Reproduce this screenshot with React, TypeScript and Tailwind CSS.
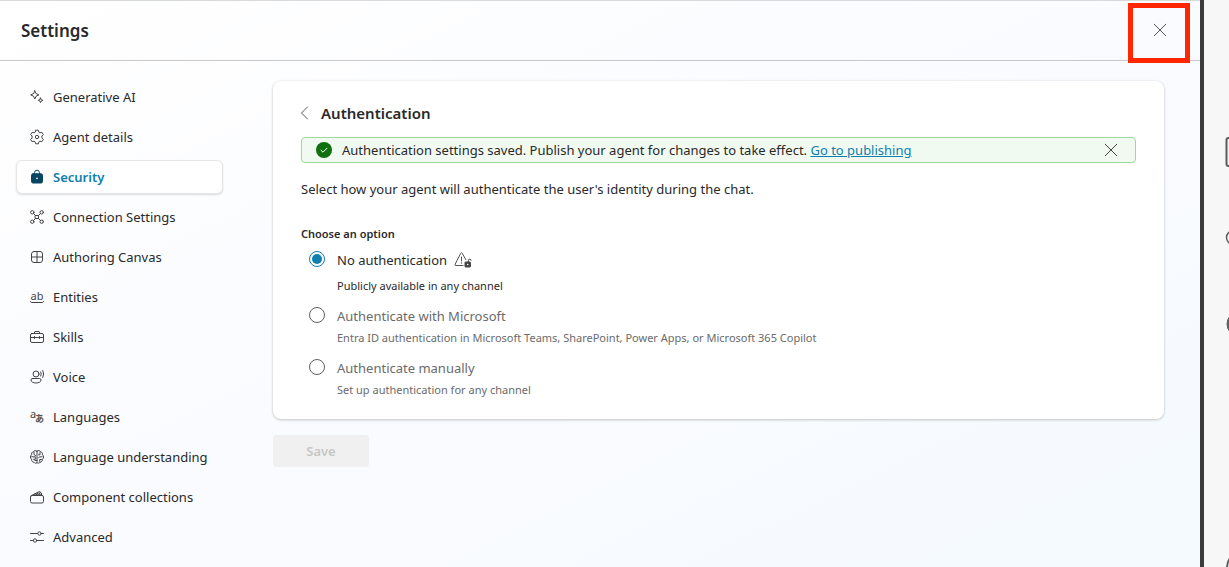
import { useState } from "react";
import type { ReactNode } from "react";

function NavIcon({ children }: { children: ReactNode }) {
  return (
    <svg
      className="size-4 shrink-0 overflow-visible"
      viewBox="0 0 16 16"
      fill="none"
      stroke="currentColor"
      strokeWidth="1"
      strokeLinecap="round"
      strokeLinejoin="round"
      aria-hidden="true"
    >
      {children}
    </svg>
  );
}

const navItems: { label: string; icon: ReactNode }[] = [
  {
    label: "Generative AI",
    icon: (
      <>
        <path d="M5.800 1.800 7.100 4.600l2.800 1.300-2.800 1.300-1.300 2.800-1.300-2.800-2.800-1.300 2.800-1.300Z" />
        <path d="m11.500 9 .7 1.600 1.600.7-1.600.7-.7 1.600-.7-1.600-1.600-.7 1.600-.7Z" />
      </>
    ),
  },
  {
    label: "Agent details",
    icon: (
      <>
        <path d="M6.700 1.200h2.600l.6 2 1 .6 2-.5 1.400 2.200L12.900 7v2l1.400 1.500-1.400 2.200-2-.5-1 .6-.6 2H6.700l-.6-2-1-.6-2 .5-1.400-2.200L3.100 9V7L1.700 5.500l1.400-2.200 2 .5 1-.6Z" />
        <circle cx="8" cy="8" r="1.700" />
      </>
    ),
  },
  {
    label: "Security",
    icon: (
      <>
        <path d="M5.600 5V3.600a2.400 2.400 0 0 1 4.800 0V5" />
        <rect x="2.500" y="4.800" width="11" height="9.200" rx="1.500" fill="currentColor" />
        <circle cx="8" cy="9.400" r=".8" fill="white" stroke="none" />
      </>
    ),
  },
  {
    label: "Connection Settings",
    icon: (
      <>
        <circle cx="3.300" cy="3.300" r="1.700" />
        <circle cx="12.700" cy="3.300" r="1.700" />
        <circle cx="3.300" cy="12.700" r="1.700" />
        <circle cx="12.700" cy="12.700" r="1.700" />
        <rect x="6.500" y="6.500" width="3" height="3" />
        <path d="m4.600 4.600 1.900 1.900m3 3 1.900 1.900m0-6.800L9.500 6.500m-3 3-1.900 1.900" />
      </>
    ),
  },
  {
    label: "Authoring Canvas",
    icon: (
      <>
        <rect x="2.500" y="2.500" width="11" height="11" rx="2.500" />
        <path d="M8 2.500v11M2.500 8h11" />
      </>
    ),
  },
  {
    label: "Entities",
    icon: (
      <>
        <text x="8" y="11" textAnchor="middle" fontSize="11" fill="currentColor" stroke="none">
          ab
        </text>
        <path d="M1.500 12.500q0 1 1 1h11q1 0 1-1" />
      </>
    ),
  },
  {
    label: "Skills",
    icon: (
      <>
        <rect x="1.500" y="4.500" width="13" height="9" rx="1.500" />
        <path d="M5 4.500 6 2.500h4l1 2M1.500 8.500h13M5.500 7.500v2M10.500 7.500v2" />
      </>
    ),
  },
  {
    label: "Voice",
    icon: (
      <>
        <circle cx="7" cy="5" r="3" />
        <path d="M3.500 9.500h7q1.500 0 1.500 1.500c0 2-2.500 3-5 3s-5-1-5-3q0-1.500 1.500-1.500ZM11.800 3q1 2 0 4M13.800 1.500q1.800 3.500 0 7" />
      </>
    ),
  },
  {
    label: "Languages",
    icon: (
      <>
        <text x="1" y="9" fontSize="11" fill="currentColor" stroke="none">
          a
        </text>
        <text x="6" y="13" fontSize="9" fill="currentColor" stroke="currentColor" strokeWidth=".3">
          あ
        </text>
      </>
    ),
  },
  {
    label: "Language understanding",
    icon: (
      <>
        <path d="M8 2.200c-1-1-3-.9-3.500.6C2.800 3 2.200 4.500 2.700 5.800 1 6.800 1 9.200 2.600 10.200c-.3 1.700.9 3 2.400 3 .7 1.300 2.200 1.300 3 .4.800.9 2.300.9 3-.4 1.500 0 2.700-1.300 2.400-3C15 9.200 15 6.800 13.300 5.800c.5-1.300-.1-2.800-1.800-3C11 1.300 9 1.200 8 2.200Z" />
        <path d="M8 2.200v11.400M5 3.500v2l1.500 1M2.700 7.800h3.600v2.500H4.500M8 11.500H6M11 3.500v2.300H9.500M13 7.800h-2.500L9.500 9M12.500 10.500h-1.800v2" />
      </>
    ),
  },
  {
    label: "Component collections",
    icon: (
      <>
        <rect x="1.500" y="6.500" width="13" height="7.500" rx="1.500" />
        <path d="M2 6.800 10.500 2.500l2 1.500v2.500M5.500 5.200h6.500M7 6.500l2-3M9.500 6.500l1.500-3" />
      </>
    ),
  },
  {
    label: "Advanced",
    icon: (
      <>
        <path d="M1.500 4.500h7M12.500 4.500h2M1.500 11.500h2.500M8 11.500h6.500" />
        <circle cx="10.500" cy="4.500" r="1.700" />
        <circle cx="6" cy="11.500" r="1.700" />
      </>
    ),
  },
];

const options = [
  { id: "none", label: "No authentication", hint: "Publicly available in any channel" },
  {
    id: "microsoft",
    label: "Authenticate with Microsoft",
    hint: "Entra ID authentication in Microsoft Teams, SharePoint, Power Apps, or Microsoft 365 Copilot",
  },
  { id: "manual", label: "Authenticate manually", hint: "Set up authentication for any channel" },
];

function CloseIcon() {
  return (
    <svg className="size-4" viewBox="0 0 16 16" fill="none" stroke="currentColor" strokeWidth="1" strokeLinecap="round" aria-hidden="true">
      <path d="m2.200 2.200 11.600 11.600M13.800 2.200 2.200 13.800" />
    </svg>
  );
}

function UnlockedWarning() {
  return (
    <svg className="size-[18px]" viewBox="0 0 18 18" fill="none" stroke="#555" strokeWidth="1" strokeLinejoin="round" aria-hidden="true">
      <path d="M9.500 14.500H2q-1.500 0-.8-1.400L6.700 2.300q.8-1.400 1.600 0L12 9" />
      <path d="M7.500 6v4" strokeLinecap="round" />
      <circle cx="7.500" cy="12" r=".7" fill="#555" stroke="none" />
      <rect x="11" y="11" width="5.500" height="5" rx=".6" fill="#444" stroke="#444" />
      <path d="M14.300 11V9.600a1.400 1.400 0 0 1 2.800 0" stroke="#444" />
      <circle cx="13.700" cy="13.500" r=".8" fill="white" stroke="none" />
    </svg>
  );
}

export default function App() {
  const [active, setActive] = useState("Security");
  const [choice, setChoice] = useState("none");

  return (
    <div className="flex h-screen overflow-hidden bg-[#f7f7f7] font-['Noto_Sans','Noto_Sans_CJK_JP',sans-serif] text-[13px] leading-5 text-[#292929]">
      <div className="flex min-w-0 flex-1 flex-col border-r-4 border-[#3b3b3b] bg-linear-to-br from-white via-[#fafbff] to-[#f4faff]">
        <header className="relative flex h-[61px] shrink-0 items-center justify-between border-y border-t-[#d8dadc] border-b-[#c8c8ca] pt-px pl-[21px]">
          <h1 className="text-[17px] leading-7 font-semibold">Settings</h1>
          <button type="button" aria-label="Close settings" className="mr-8 mb-[2px] text-[#555]">
            <CloseIcon />
          </button>
          <span className="pointer-events-none absolute top-[2px] right-[10px] h-[60px] w-[62px] border-5 border-[#ff2600]" />
        </header>

        <div className="flex min-h-0 flex-1">
          <nav aria-label="Settings sections" className="flex w-[223px] shrink-0 flex-col gap-[6px] pt-[19px] pl-4">
            {navItems.map((item) => {
              const selected = item.label === active;
              return (
                <button
                  key={item.label}
                  type="button"
                  onClick={() => setActive(item.label)}
                  aria-current={selected ? "page" : undefined}
                  className={
                    selected
                      ? "flex h-[34px] shrink-0 items-center gap-2 rounded-md border border-[#e4e6e8] bg-white pl-3 font-semibold whitespace-nowrap text-[#0f80ad] shadow-[0_1px_2px_rgba(0,0,0,0.14)]"
                      : "flex h-[34px] shrink-0 items-center gap-2 border border-transparent pl-3 whitespace-nowrap"
                  }
                >
                  <span className={selected ? "text-[#064663]" : "text-[#444]"}>
                    <NavIcon>{item.icon}</NavIcon>
                  </span>
                  {item.label}
                </button>
              );
            })}
          </nav>

          <main className="min-w-0 flex-1 pt-5 pr-9 pl-[50px]">
            <section className="rounded-lg bg-white px-7 pt-[22px] pb-[21px] shadow-[0_1px_3px_rgba(0,0,0,0.2),0_0_2px_rgba(0,0,0,0.08)]">
              <div className="flex items-center gap-[9px]">
                <button type="button" aria-label="Back" className="text-[#555]">
                  <svg className="h-4 w-[11px]" viewBox="0 0 11 16" fill="none" stroke="currentColor" strokeLinecap="round" strokeLinejoin="round" aria-hidden="true">
                    <path d="M6.500 2 .5 8l6 6" />
                  </svg>
                </button>
                <h2 className="text-[15px] leading-5 font-semibold">Authentication</h2>
              </div>

              <div role="status" className="mt-[14px] flex h-[26px] items-center rounded-[4px] border border-[#9fd89f] bg-[#f1faf1] pr-4 pl-[14px]">
                <svg className="size-4 shrink-0" viewBox="0 0 16 16" aria-hidden="true">
                  <circle cx="8" cy="8" r="8" fill="#107010" />
                  <path d="m5 8.200 2 2 4-4" fill="none" stroke="white" strokeLinecap="round" strokeLinejoin="round" />
                </svg>
                <p className="ml-[10px] flex-1">
                  Authentication settings saved. Publish your agent for changes to take effect.{" "}
                  <a href="#publishing" className="text-[#0f7fae] underline">Go to publishing</a>
                </p>
                <button type="button" aria-label="Dismiss message" className="text-[#444]">
                  <CloseIcon />
                </button>
              </div>

              <p className="mt-4">Select how your agent will authenticate the user&apos;s identity during the chat.</p>

              <fieldset className="mt-[27px]">
                <legend className="text-[11px] leading-4 font-semibold">Choose an option</legend>
                {options.map((option) => {
                  const checked = option.id === choice;
                  return (
                    <div
                      key={option.id}
                      className={checked ? "flex gap-3 pt-2 pl-2" : "flex gap-3 pt-3 pl-2 text-[#6b6b6b]"}
                    >
                      <input
                        type="radio"
                        id={option.id}
                        name="authentication"
                        checked={checked}
                        onChange={() => setChoice(option.id)}
                        aria-describedby={`${option.id}-hint`}
                        className="mt-px size-4 shrink-0 appearance-none rounded-full border border-[#616161] bg-white bg-clip-content p-[2px] checked:border-[#0f7fae] checked:bg-[#0f7fae]"
                      />
                      <div>
                        <div className="flex h-5 items-center gap-[7px]">
                          <label htmlFor={option.id}>{option.label}</label>
                          {option.id === "none" && <UnlockedWarning />}
                        </div>
                        <p id={`${option.id}-hint`} className={checked ? "mt-2 text-[11px] leading-4" : "mt-1 text-[11px] leading-4"}>
                          {option.hint}
                        </p>
                      </div>
                    </div>
                  );
                })}
              </fieldset>
            </section>

            <button type="button" disabled className="mt-4 h-8 w-24 rounded-sm bg-[#f1f0f0] font-semibold text-[#c7c7c7]">
              Save
            </button>
          </main>
        </div>
      </div>

      <aside className="w-[25px] shrink-0 overflow-hidden">
        <svg className="h-[567px] w-[25px]" viewBox="0 0 25 567" fill="none" stroke="#5d5d5d" aria-hidden="true">
          <rect x="22.500" y="138" width="28" height="28" rx="2" strokeWidth="2" />
          <circle cx="29.500" cy="237.500" r="7" strokeWidth="1.500" />
          <circle cx="35" cy="324" r="12" fill="#5d5d5d" />
          <circle cx="41" cy="568" r="18" strokeWidth="2" />
        </svg>
      </aside>
    </div>
  );
}
